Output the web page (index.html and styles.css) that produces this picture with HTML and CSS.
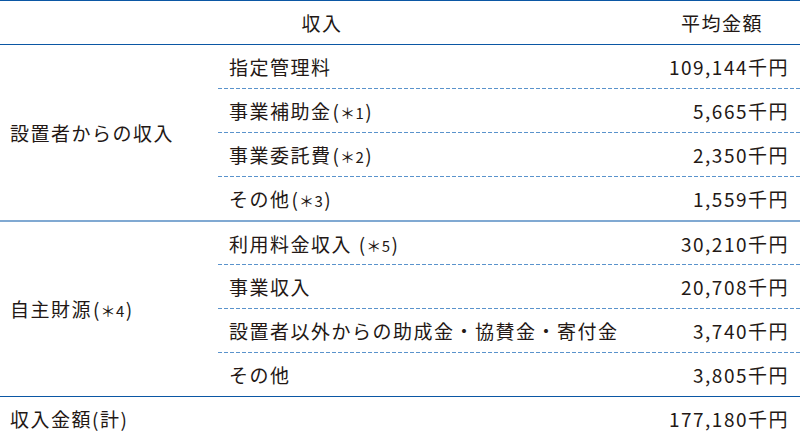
FILE: index.html
```html
<!DOCTYPE html>
<html lang="ja">
<head>
<meta charset="utf-8">
<link rel="stylesheet" href="styles.css">
</head>
<body>
<table class="tbl">
  <colgroup>
    <col class="c1">
    <col class="c2">
    <col class="c3">
  </colgroup>
  <thead>
    <tr>
      <th colspan="2" class="h-left">収入</th>
      <th class="h-right">平均金額</th>
    </tr>
  </thead>
  <tbody class="sec">
    <tr>
      <td rowspan="4" class="cat">設置者からの収入</td>
      <td class="item dash">指定管理料</td>
      <td class="num dash">109,144千円</td>
    </tr>
    <tr>
      <td class="item dash">事業補助金<span class="par">(</span><span class="note">＊1</span><span class="par">)</span></td>
      <td class="num dash">5,665千円</td>
    </tr>
    <tr>
      <td class="item dash">事業委託費<span class="par">(</span><span class="note">＊2</span><span class="par">)</span></td>
      <td class="num dash">2,350千円</td>
    </tr>
    <tr class="last">
      <td class="item">その他<span class="par">(</span><span class="note">＊3</span><span class="par">)</span></td>
      <td class="num">1,559千円</td>
    </tr>
  </tbody>
  <tbody class="sec sec2">
    <tr>
      <td rowspan="4" class="cat">自主財源<span class="par">(</span><span class="note">＊4</span><span class="par">)</span></td>
      <td class="item dash">利用料金収入 <span class="par">(</span><span class="note">＊5</span><span class="par">)</span></td>
      <td class="num dash">30,210千円</td>
    </tr>
    <tr>
      <td class="item dash">事業収入</td>
      <td class="num dash">20,708千円</td>
    </tr>
    <tr>
      <td class="item dash">設置者以外からの助成金・協賛金・寄付金</td>
      <td class="num dash">3,740千円</td>
    </tr>
    <tr>
      <td class="item">その他</td>
      <td class="num">3,805千円</td>
    </tr>
  </tbody>
  <tfoot>
    <tr>
      <td colspan="2" class="total">収入金額(計)</td>
      <td class="num">177,180千円</td>
    </tr>
  </tfoot>
</table>
</body>
</html>
```

FILE: styles.css
```css
html, body {
  margin: 0;
  padding: 0;
  background: #ffffff;
}

body {
  font-family: "Noto Sans CJK JP", "Noto Sans", sans-serif;
  color: #231815;
}

.tbl {
  width: 800px;
  border-collapse: collapse;
  table-layout: fixed;
  font-size: 19px;
  letter-spacing: 1.5px;
}

.c1 { width: 218px; }
.c3 { width: 160px; }

.tbl th,
.tbl td {
  height: 44px;
  padding: 0;
  vertical-align: middle;
  font-weight: 400;
  white-space: nowrap;
  box-sizing: border-box;
}

.tbl thead th {
  border-top: 1px solid #0b57a4;
  border-bottom: 1px solid #0b57a4;
  text-align: center;
}

.h-left { padding-left: 4px !important; }
.h-right { padding-left: 4px !important; }

.cat {
  padding-left: 10px !important;
  text-align: left;
}

.item {
  padding-left: 11px !important;
  text-align: left;
}

.num {
  text-align: right;
  padding-right: 11px !important;
}

.dash {
  background-image: linear-gradient(to right, #5a93cc 4px, transparent 4px);
  background-size: 6px 1px;
  background-repeat: repeat-x;
  background-position: left bottom;
}

.par {
  letter-spacing: 0;
  padding: 0 1px;
}

.note {
  font-size: 15px;
  letter-spacing: 0.5px;
}

.sec2 tr:first-child td {
  border-top: 2px solid #80a9d2;
}

.tbl tfoot td {
  border-top: 1px solid #0b57a4;
  border-bottom: 1px solid #0b57a4;
}

.total {
  padding-left: 10px !important;
  text-align: left;
}
```
